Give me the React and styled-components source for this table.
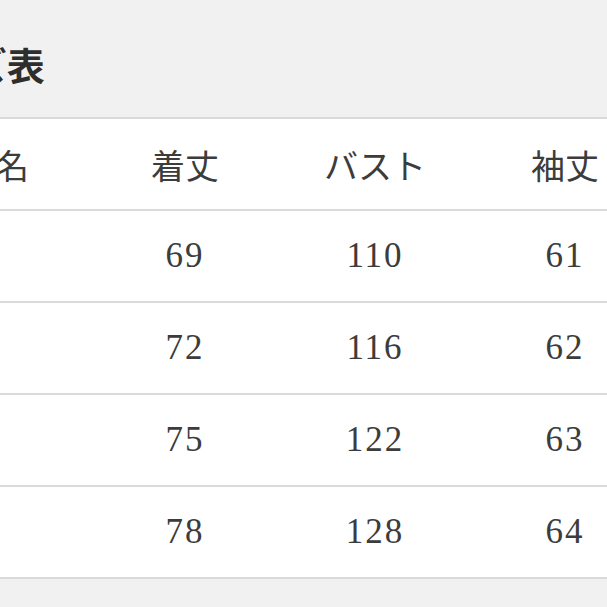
import styled, { createGlobalStyle } from "styled-components";

const GlobalStyle = createGlobalStyle`
  html, body {
    margin: 0;
    padding: 0;
    background: #f1f1f1;
  }
  body {
    font-family: "Liberation Serif", "Noto Sans CJK JP", serif;
    color: #3a3a3a;
  }
`;

const Viewport = styled.div`
  width: 607px;
  height: 607px;
  overflow: hidden;
  background: #f1f1f1;
`;

// the screenshot is cropped on the left, so the sheet starts off-screen
const Sheet = styled.div`
  margin-left: -106px;
  width: 766px;
`;

const Title = styled.h2`
  margin: 0;
  height: 117px;
  padding-top: 10px;
  box-sizing: border-box;
  display: flex;
  align-items: center;
  font-family: "Noto Sans CJK JP", sans-serif;
  font-size: 38px;
  font-weight: 700;
  color: #2e2e2e;
`;

const Table = styled.div`
  background: #ffffff;
  border-top: 2px solid #dadada;
`;

const Row = styled.div`
  display: grid;
  grid-template-columns: 196px 190px 190px 190px;
  height: 90px;
  align-items: center;
  border-bottom: 2px solid #dadada;
`;

const Cell = styled.div`
  text-align: ${(p) => (p.$first ? "left" : "center")};
  font-family: ${(p) =>
    p.$head
      ? `"Noto Sans CJK JP", sans-serif`
      : `"Liberation Serif", "Noto Sans CJK JP", serif`};
  font-size: ${(p) => (p.$head ? "34px" : "35px")};
  font-weight: 400;
  color: #3c3c3c;
  letter-spacing: ${(p) => (p.$head ? "0" : "2px")};
`;

const columns = ["サイズ名", "着丈", "バスト", "袖丈"];

const sizes = [
  [69, 110, 61],
  [72, 116, 62],
  [75, 122, 63],
  [78, 128, 64],
];

export default function App() {
  return (
    <>
      <GlobalStyle />
      <Viewport>
        <Sheet>
          <Title>サイズ表</Title>
          <Table>
            <Row>
              {columns.map((c, i) => (
                <Cell key={c} $head $first={i === 0}>
                  {c}
                </Cell>
              ))}
            </Row>
            {sizes.map((r) => (
              <Row key={r[0]}>
                <Cell $first />
                {r.map((v, i) => (
                  <Cell key={i}>{v}</Cell>
                ))}
              </Row>
            ))}
          </Table>
        </Sheet>
      </Viewport>
    </>
  );
}
